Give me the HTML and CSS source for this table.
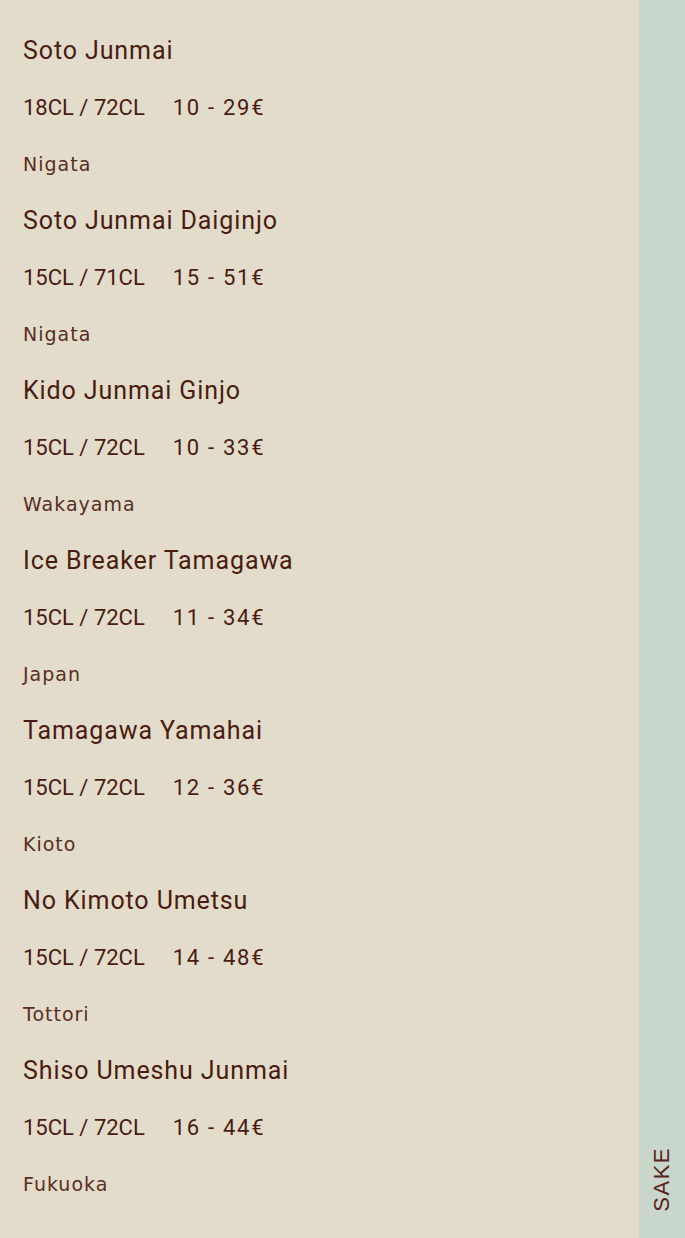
FILE: index.html
```html
<!DOCTYPE html>
<html lang="fr">
<head>
<meta charset="utf-8">
<title>Sake</title>
<link rel="stylesheet" href="styles.css">
</head>
<body>
<div class="page">
  <main class="menu">
    <div class="item">
      <div class="name">Soto Junmai</div>
      <div class="price"><span class="vol">18CL / 72CL</span><span class="cost">10 - 29€</span></div>
      <div class="origin">Nigata</div>
    </div>
    <div class="item">
      <div class="name">Soto Junmai Daiginjo</div>
      <div class="price"><span class="vol">15CL / 71CL</span><span class="cost">15 - 51€</span></div>
      <div class="origin">Nigata</div>
    </div>
    <div class="item">
      <div class="name">Kido Junmai Ginjo</div>
      <div class="price"><span class="vol">15CL / 72CL</span><span class="cost">10 - 33€</span></div>
      <div class="origin">Wakayama</div>
    </div>
    <div class="item">
      <div class="name">Ice Breaker Tamagawa</div>
      <div class="price"><span class="vol">15CL / 72CL</span><span class="cost">11 - 34€</span></div>
      <div class="origin">Japan</div>
    </div>
    <div class="item">
      <div class="name">Tamagawa Yamahai</div>
      <div class="price"><span class="vol">15CL / 72CL</span><span class="cost">12 - 36€</span></div>
      <div class="origin">Kioto</div>
    </div>
    <div class="item">
      <div class="name">No Kimoto Umetsu</div>
      <div class="price"><span class="vol">15CL / 72CL</span><span class="cost">14 - 48€</span></div>
      <div class="origin">Tottori</div>
    </div>
    <div class="item">
      <div class="name">Shiso Umeshu Junmai</div>
      <div class="price"><span class="vol">15CL / 72CL</span><span class="cost">16 - 44€</span></div>
      <div class="origin">Fukuoka</div>
    </div>
  </main>
  <aside class="side">
    <span class="side-label">SAKE</span>
  </aside>
</div>
</body>
</html>
```

FILE: styles.css
```css
html, body {
  margin: 0;
  padding: 0;
  background: #e3dcca;
}

.page {
  display: flex;
  width: 685px;
  height: 1238px;
  overflow: hidden;
}

.menu {
  width: 639px;
  flex: none;
  background: #e3dcca;
  padding: 22px 0 0 23px;
  box-sizing: border-box;
  color: #4a1b10;
}

.item {
  display: flex;
  flex-direction: column;
}

.name {
  font-family: Roboto, "Liberation Sans", sans-serif;
  font-size: 25px;
  letter-spacing: 0.9px;
  height: 57px;
  line-height: 57px;
}

.price {
  font-family: Roboto, "Liberation Sans", sans-serif;
  font-size: 22px;
  height: 57px;
  line-height: 57px;
  display: flex;
  gap: 28px;
}

.cost {
  letter-spacing: 1.7px;
}

.origin {
  font-family: "DejaVu Sans", "Noto Sans", sans-serif;
  font-size: 19px;
  letter-spacing: 1px;
  height: 56px;
  line-height: 56px;
  color: #5a2d22;
}

.side {
  flex: 1;
  background: #c8d6cc;
  display: flex;
  align-items: flex-end;
  justify-content: center;
  padding-bottom: 26px;
}

.side-label {
  writing-mode: vertical-rl;
  transform: rotate(180deg);
  font-family: "Liberation Sans", Arial, sans-serif;
  font-size: 22px;
  letter-spacing: 1.5px;
  color: #5a2218;
}
```
